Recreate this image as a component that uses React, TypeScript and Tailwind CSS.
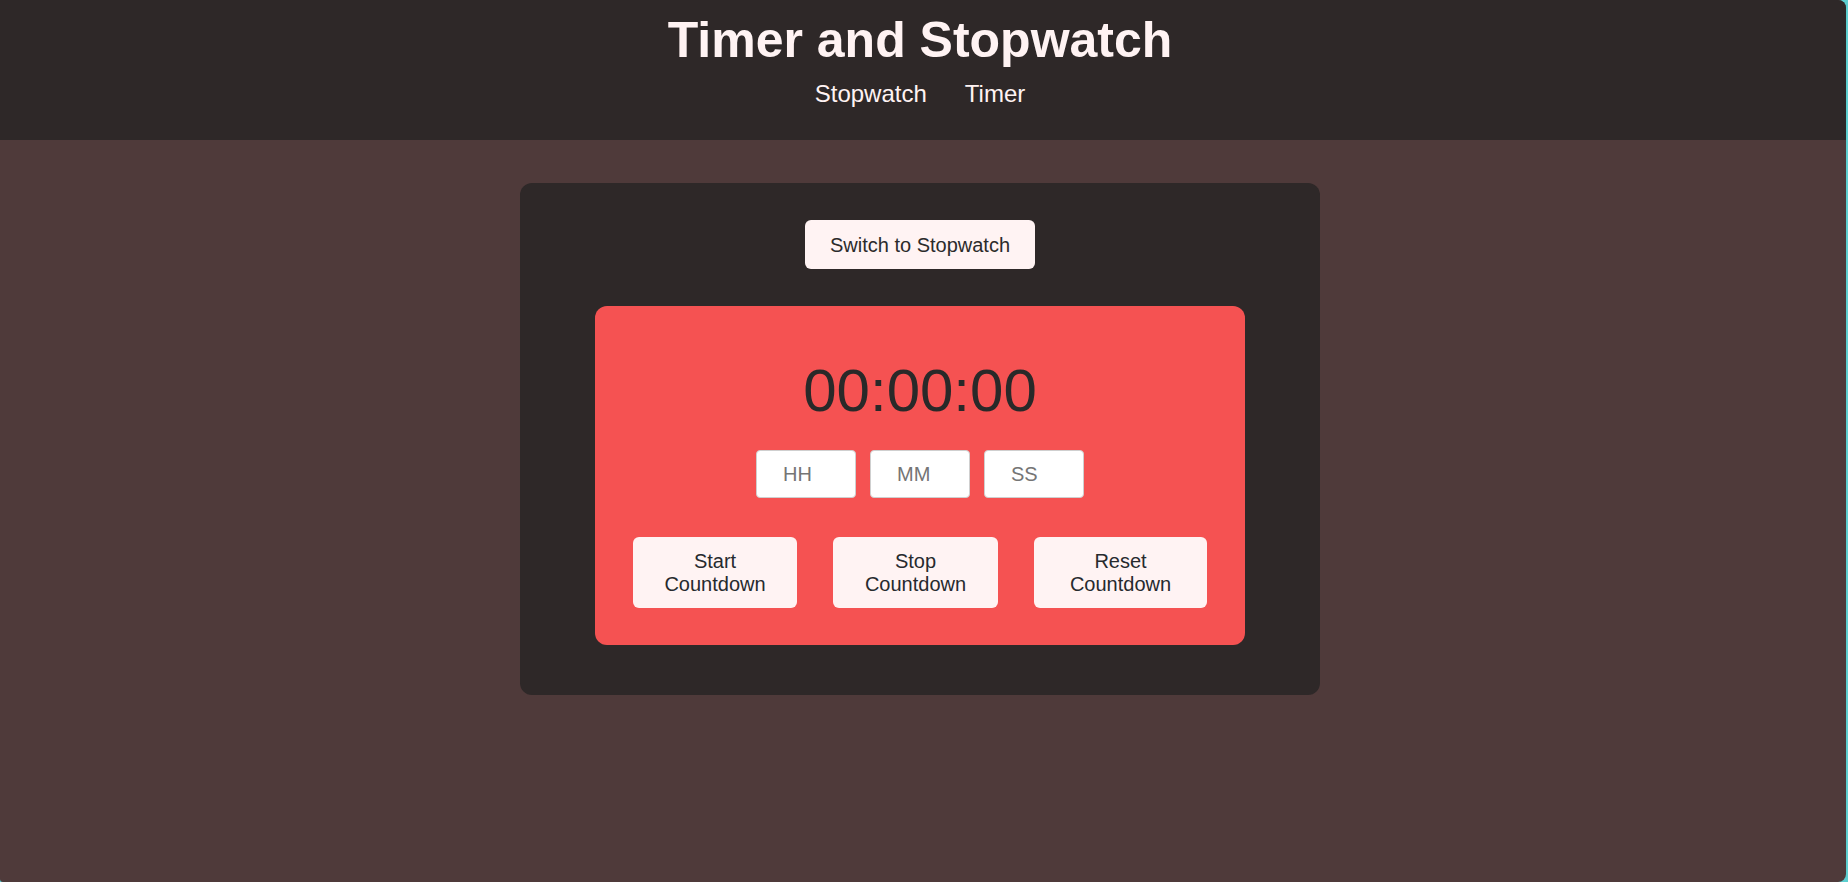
const inputs = ["HH", "MM", "SS"];

const actions = [
  { first: "Start", width: "w-[164px]" },
  { first: "Stop", width: "w-[165px]" },
  { first: "Reset", width: "w-[173px]" },
];

const App = () => {
  return (
    <div className="w-screen h-screen bg-[#5ccfd0] flex font-['Liberation_Sans',Arial,sans-serif]">
      <div className="w-[1846px] h-[882px] bg-[#4f3a3a] rounded-tr-lg rounded-br-lg rounded-bl-[3px] overflow-hidden pr-[6px]">
        <header className="h-[140px] bg-[#2e2828] pt-3 text-center text-[#fff3f3] -mr-[6px] pr-[6px]">
          <h1 className="text-[50px] leading-[56px] font-bold">Timer and Stopwatch</h1>
          <nav className="mt-3 flex justify-center gap-[38px] text-[24px] leading-[28px]">
            <a href="#">Stopwatch</a>
            <a href="#">Timer</a>
          </nav>
        </header>

        <main className="flex justify-center pt-[43px]">
          <div className="w-[800px] bg-[#2e2828] rounded-xl pt-[37px] pb-[50px] flex flex-col items-center">
            <button className="w-[230px] h-[49px] bg-[#fff3f3] rounded-md text-[20px] text-[#2b2b2b]">
              Switch to Stopwatch
            </button>

            <div className="mt-[37px] w-[650px] bg-[#f55252] rounded-xl pt-[51px] pb-[37px] flex flex-col items-center">
              <div className="text-[60px] leading-[67px] text-[#292929]">00:00:00</div>

              <div className="mt-[26px] flex gap-[14px]">
                {inputs.map((p) => (
                  <input
                    key={p}
                    placeholder={p}
                    className="w-[100px] h-[48px] bg-white border border-[#cfcfcf] rounded-[4px] pl-[26px] text-[20px] text-[#2b2b2b] placeholder:text-[#757575] outline-none"
                  />
                ))}
              </div>

              <div className="mt-[39px] flex gap-[36px]">
                {actions.map((a) => (
                  <button
                    key={a.first}
                    className={`${a.width} h-[71px] bg-[#fff3f3] rounded-md text-[20px] leading-[23px] text-[#262a2e]`}
                  >
                    {a.first}
                    <br />
                    Countdown
                  </button>
                ))}
              </div>
            </div>
          </div>
        </main>
      </div>
    </div>
  );
};

export default App;
